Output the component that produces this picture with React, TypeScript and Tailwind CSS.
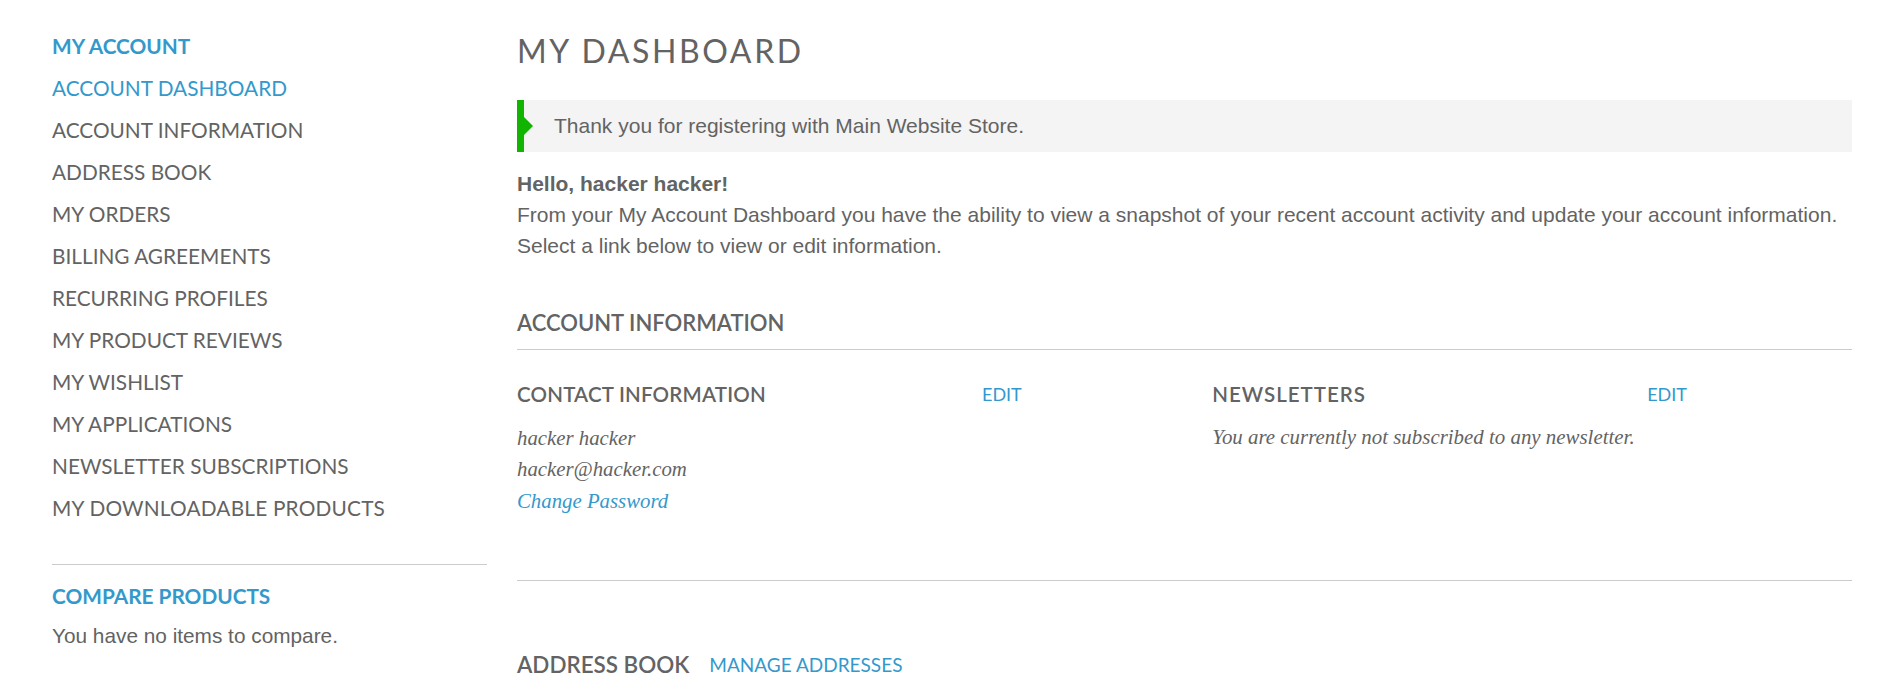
import React from 'react'

const navLinks = [
  { label: 'ACCOUNT DASHBOARD', active: true },
  { label: 'ACCOUNT INFORMATION' },
  { label: 'ADDRESS BOOK' },
  { label: 'MY ORDERS' },
  { label: 'BILLING AGREEMENTS' },
  { label: 'RECURRING PROFILES' },
  { label: 'MY PRODUCT REVIEWS' },
  { label: 'MY WISHLIST' },
  { label: 'MY APPLICATIONS' },
  { label: 'NEWSLETTER SUBSCRIPTIONS' },
  { label: 'MY DOWNLOADABLE PRODUCTS' },
]

const heading = "font-['Lato',sans-serif]"
const body = "font-['Liberation_Sans',Arial,sans-serif]"
const serif = "font-['Liberation_Serif','Times_New_Roman',serif] italic"

function Sidebar() {
  return (
    <aside className="w-[435px] shrink-0 pt-[33px]">
      {/* ── My account nav ── */}
      <h2 className={`${heading} text-[20.8px] leading-[26px] font-bold text-[#3399cc]`}>MY ACCOUNT</h2>
      <ul className="mt-[8px]">
        {navLinks.map((link) => (
          <li
            key={link.label}
            className={`${heading} flex h-[42px] items-center text-[20.8px] ${
              link.active ? 'text-[#3399cc]' : 'text-[#636363]'
            } ${link.label === 'MY DOWNLOADABLE PRODUCTS' ? 'tracking-[0.2px]' : ''}`}
          >
            {link.label}
          </li>
        ))}
      </ul>

      {/* ── Compare ── */}
      <div className="mt-[35px] border-t border-[#cccccc] pt-[18px]">
        <h2 className={`${heading} text-[20.8px] leading-[26px] font-bold text-[#3399cc]`}>COMPARE PRODUCTS</h2>
        <p className={`${body} mt-[12px] text-[20.8px] leading-[30px] text-[#636363]`}>You have no items to compare.</p>
      </div>
    </aside>
  )
}

function BoxHead({ title, titleWidth, tracking }: { title: string; titleWidth: string; tracking: string }) {
  return (
    <div className="flex items-center h-[26px]">
      <h3 className={`${heading} ${titleWidth} ${tracking} text-[20.5px] font-semibold text-[#636363]`}>{title}</h3>
      <a className={`${heading} text-[18px] text-[#3399cc]`}>EDIT</a>
    </div>
  )
}

export default function App() {
  return (
    <div className="min-h-screen bg-white flex pl-[52px] pr-[42px] gap-[30px]">
      <Sidebar />

      <main className="flex-1 pt-[33px]">
        <h1 className={`${heading} text-[32px] tracking-[2.6px] leading-[36px] text-[#636363]`}>MY DASHBOARD</h1>

        {/* ── Success message ── */}
        <div className="relative mt-[31px] flex h-[52px] items-center border-l-[7px] border-[#11b400] bg-[#f4f4f4] pl-[30px]">
          <span className="absolute left-0 top-1/2 -translate-y-1/2 h-0 w-0 border-y-[9px] border-l-[9px] border-y-transparent border-l-[#11b400]" />
          <span className={`${body} text-[21px] text-[#636363]`}>Thank you for registering with Main Website Store.</span>
        </div>

        <div className={`${body} mt-[16px] text-[21px] leading-[31.2px] text-[#636363]`}>
          <p className="font-bold">Hello, hacker hacker!</p>
          <p>
            From your My Account Dashboard you have the ability to view a snapshot of your recent account activity and
            update your account information. Select a link below to view or edit information.
          </p>
        </div>

        {/* ── Account information ── */}
        <section className="mt-[48px]">
          <h2 className={`${heading} border-b border-[#cccccc] pb-[13px] text-[22px] leading-[26px] font-semibold text-[#636363]`}>
            ACCOUNT INFORMATION
          </h2>

          <div className="flex pt-[32px] pb-[63px] border-b border-[#cccccc]">
            <div className="w-[48%]">
              <BoxHead title="CONTACT INFORMATION" titleWidth="w-[465px]" tracking="tracking-[0.2px]" />
              <div className={`${serif} mt-[14px] text-[20.8px] leading-[31.8px] text-[#636363]`}>
                <p>hacker hacker</p>
                <p>hacker@hacker.com</p>
                <a className="text-[#3399cc]">Change Password</a>
              </div>
            </div>
            <div className="ml-[4.15%] w-[48%]">
              <BoxHead title="NEWSLETTERS" titleWidth="w-[435px]" tracking="tracking-[1px]" />
              <p className={`${serif} mt-[14px] text-[20.9px] leading-[31.8px] text-[#636363]`}>
                You are currently not subscribed to any newsletter.
              </p>
            </div>
          </div>
        </section>

        {/* ── Address book ── */}
        <section className="mt-[71px] flex items-center gap-[20px] h-[26px]">
          <h2 className={`${heading} text-[22.4px] font-semibold text-[#636363]`}>ADDRESS BOOK</h2>
          <a className={`${heading} text-[19px] text-[#3399cc]`}>MANAGE ADDRESSES</a>
        </section>
      </main>
    </div>
  )
}
